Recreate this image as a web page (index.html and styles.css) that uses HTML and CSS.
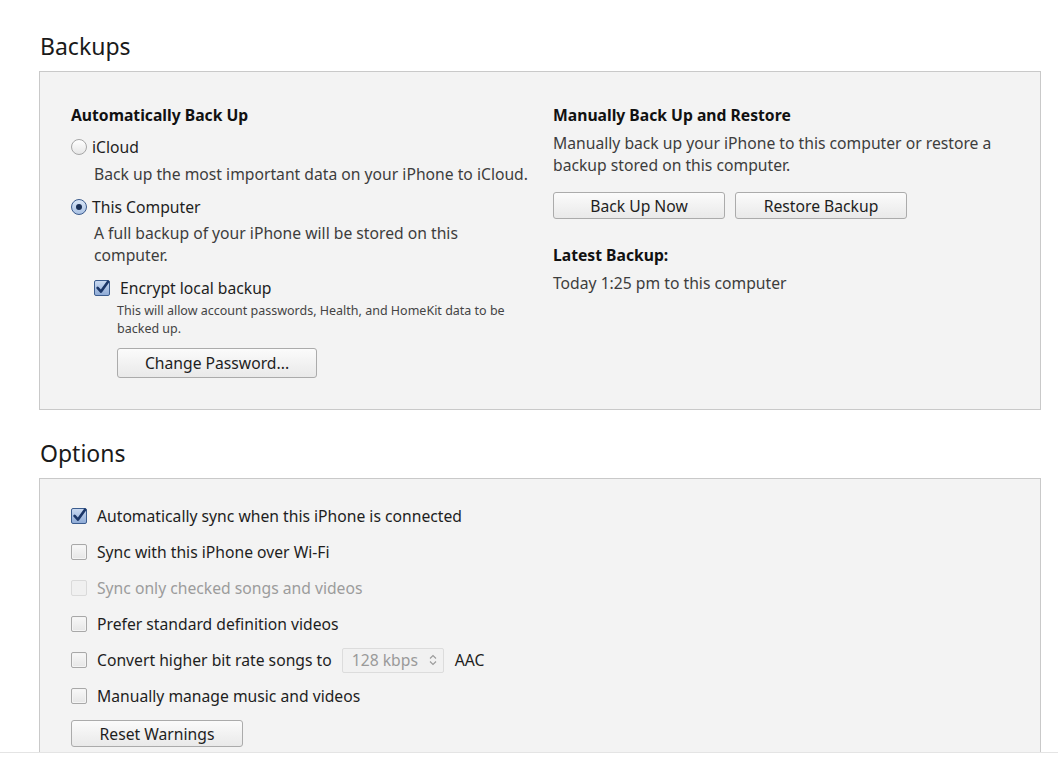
FILE: index.html
```html
<!DOCTYPE html>
<html>
<head>
<meta charset="utf-8">
<link rel="stylesheet" href="styles.css">
</head>
<body>
<div class="main">
  <h2 class="section-title first">Backups</h2>
  <div class="panel backups">
    <div class="col left">
      <div class="col-title">Automatically Back Up</div>
      <label class="radio-row r1"><span class="radio"></span>iCloud</label>
      <div class="desc d1">Back up the most important data on your iPhone to iCloud.</div>
      <label class="radio-row r2"><span class="radio on"></span>This Computer</label>
      <div class="desc d2">A full backup of your iPhone will be stored on this<br>computer.</div>
      <div class="sub">
        <label class="check-row enc"><span class="check on"><svg viewBox="0 0 16 16"><path d="M3.4 8.4 L6.6 11.8 L13.2 2.6" fill="none" stroke="#1b3668" stroke-width="2.5" stroke-linecap="round" stroke-linejoin="round"/></svg></span>Encrypt local backup</label>
        <div class="subsub">
          <div class="small">This will allow account passwords, Health, and HomeKit data to be<br>backed up.</div>
          <button class="btn pw">Change Password...</button>
        </div>
      </div>
    </div>
    <div class="col right">
      <div class="col-title">Manually Back Up and Restore</div>
      <div class="desc rd">Manually back up your iPhone to this computer or restore a<br>backup stored on this computer.</div>
      <div class="btn-row">
        <button class="btn wide">Back Up Now</button>
        <button class="btn wide">Restore Backup</button>
      </div>
      <div class="col-title latest">Latest Backup:</div>
      <div class="desc today">Today 1:25 pm to this computer</div>
    </div>
  </div>

  <h2 class="section-title">Options</h2>
  <div class="panel options">
    <label class="opt"><span class="check on"><svg viewBox="0 0 16 16"><path d="M3.4 8.4 L6.6 11.8 L13.2 2.6" fill="none" stroke="#1b3668" stroke-width="2.5" stroke-linecap="round" stroke-linejoin="round"/></svg></span>Automatically sync when this iPhone is connected</label>
    <label class="opt"><span class="check"></span>Sync with this iPhone over Wi-Fi</label>
    <label class="opt disabled"><span class="check dis"></span>Sync only checked songs and videos</label>
    <label class="opt"><span class="check"></span>Prefer standard definition videos</label>
    <label class="opt"><span class="check"></span>Convert higher bit rate songs to <span class="select">128 kbps<svg viewBox="0 0 10 14"><path d="M2 5.5 L5 2.5 L8 5.5 M2 8.5 L5 11.5 L8 8.5" fill="none" stroke="#9a9a9a" stroke-width="1.1"/></svg></span> AAC</label>
    <label class="opt"><span class="check"></span>Manually manage music and videos</label>
    <button class="btn reset">Reset Warnings</button>
  </div>
</div>
<div class="footer"></div>
</body>
</html>
```

FILE: styles.css
```css
html, body {
  margin: 0;
  padding: 0;
  background: #ffffff;
  overflow: hidden;
}
body {
  width: 1058px;
  height: 765px;
  font-family: "Noto Sans", "Open Sans", sans-serif;
  font-size: 15.7px;
  color: #1e1e1e;
}
.main {
  height: 752px;
  overflow: hidden;
  padding-left: 39px;
  box-sizing: border-box;
}
.footer {
  border-top: 1px solid #e4e4e4;
  height: 12px;
  background: #fff;
}
.section-title {
  margin: 27px 0 9px 1px;
  font-weight: normal;
  font-size: 23px;
  line-height: 32px;
  height: 32px;
  color: #1a1a1a;
}
.section-title.first {
  margin-top: 30px;
}
.panel {
  width: 1002px;
  box-sizing: border-box;
  border: 1px solid #c9c9c9;
  background: #f3f3f3;
}
.backups {
  display: grid;
  grid-template-columns: 482px 1fr;
  padding: 32px 0 31px 31px;
}
.col-title {
  font-weight: bold;
  line-height: 22px;
  color: #111;
}
.radio-row, .check-row, .opt {
  display: flex;
  align-items: center;
  line-height: 22px;
  height: 22px;
}
.r1 { margin-top: 10px; }
.r2 { margin-top: 11px; }
.desc {
  line-height: 22px;
  color: #3d3d3d;
}
.left .desc { padding-left: 23px; }
.d1 { margin-top: 5px; }
.d2 { margin-top: 4px; }
.radio {
  width: 16px;
  height: 16px;
  box-sizing: border-box;
  border-radius: 50%;
  border: 1px solid #a6a6a6;
  background: linear-gradient(#ffffff, #e6e6e6);
  margin-right: 5px;
  position: relative;
  flex: none;
}
.radio.on {
  border-color: #3a5a8c;
  background: linear-gradient(#dbe7f7, #a9c1e3);
}
.radio.on::after {
  content: "";
  position: absolute;
  left: 4px;
  top: 4px;
  width: 6px;
  height: 6px;
  border-radius: 50%;
  background: #1a2f55;
}
.sub {
  padding-left: 23px;
}
.subsub {
  padding-left: 23px;
}
.enc { margin-top: 11px; }
.check {
  width: 16px;
  height: 16px;
  box-sizing: border-box;
  border: 1px solid #a8a8a8;
  border-radius: 2px;
  background: linear-gradient(#f8f8f8, #e6e6e6);
  box-shadow: inset 0 0 0 1px #f4f4f4;
  margin-right: 9px;
  position: relative;
  flex: none;
}
.check svg {
  position: absolute;
  left: -1px;
  top: -2px;
  width: 17px;
  height: 17px;
}
.check.on {
  border-color: #3b5c8e;
  background: linear-gradient(#c9d9f1, #8fabd6);
  box-shadow: none;
}
.check.dis {
  border-color: #dadada;
  background: #f0f0f0;
  box-shadow: none;
}
.enc .check { margin-right: 10px; }
.small {
  font-size: 12.5px;
  line-height: 18px;
  color: #444;
  margin-top: 3px;
}
.btn {
  font-family: inherit;
  font-size: 15.7px;
  color: #1e1e1e;
  border: 1px solid #ababab;
  border-radius: 3px;
  background: linear-gradient(#fbfbfb, #e9e9e9);
  padding: 0;
  box-sizing: border-box;
  display: block;
}
.pw {
  margin-top: 10px;
  width: 200px;
  height: 30px;
}
.rd { margin-top: 6px; }
.btn-row {
  display: flex;
  gap: 10px;
  margin-top: 16px;
}
.btn.wide {
  width: 172px;
  height: 27px;
}
.latest { margin-top: 25px; }
.today { margin-top: 6px; }
.options {
  padding: 26px 0 20px 31px;
  height: 300px;
}
.opt {
  margin-bottom: 14px;
}
.opt .check { margin-right: 10px; }
.opt.disabled { color: #9c9c9c; }
.select {
  display: inline-flex;
  align-items: center;
  justify-content: space-between;
  width: 102px;
  height: 25px;
  flex: none;
  box-sizing: border-box;
  border: 1px solid #dcdcdc;
  border-radius: 2px;
  background: #f1f1f1;
  color: #9a9a9a;
  padding: 0 5px 0 9px;
  margin: 0 11px 0 10px;
}
.select svg {
  width: 10px;
  height: 14px;
}
.reset {
  margin-top: -1px;
  width: 172px;
  height: 27px;
}
```
